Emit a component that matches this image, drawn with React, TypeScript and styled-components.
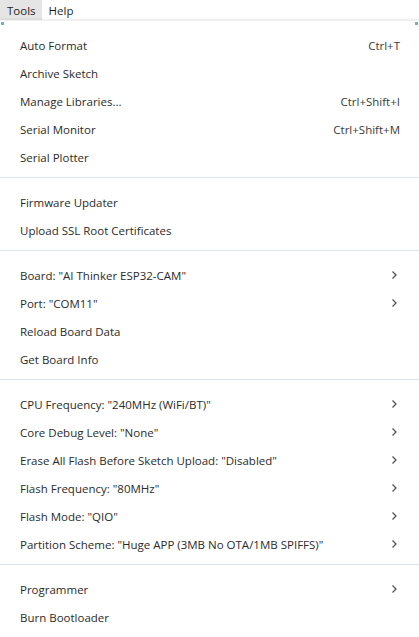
import React from "react";
import styled, { createGlobalStyle } from "styled-components";

const Global = createGlobalStyle`
  html, body { margin: 0; padding: 0; background: #ffffff; }
  body { font-family: "Segoe UI", "Open Sans", "Noto Sans", sans-serif; }
`;

const Page = styled.div`
  width: 419px;
  height: 637px;
  overflow: hidden;
  background: #ffffff;
  display: flex;
  flex-direction: column;
`;

const MenuBar = styled.div`
  display: flex;
  height: 22px;
  align-items: stretch;
  background: #ffffff;
`;

const MenuTitle = styled.div<{ $active?: boolean }>`
  display: flex;
  align-items: center;
  padding: 1px 6px 0 7px;
  font-size: 11.5px;
  color: #1f1f1f;
  background: ${(p) => (p.$active ? "#e5e5e5" : "transparent")};
`;

const Panel = styled.div`
  flex: 1;
  position: relative;
  background: #ffffff;
  box-shadow: 0 -1px 2px rgba(0, 0, 0, 0.08);
  border-top: 1px solid #f0f0f0;
  padding-top: 8px;
  display: flex;
  flex-direction: column;
`;

const Corner = styled.div<{ $side: "left" | "right" }>`
  position: absolute;
  top: 1px;
  ${(p) => (p.$side === "left" ? "left: 1px;" : "right: 1px;")}
  width: 3px;
  height: 3px;
  background: #3c8f8f;
  opacity: 0.7;
`;

const Section = styled.div`
  display: flex;
  flex-direction: column;
  padding: 0 0 8px;
`;

const Separator = styled.div`
  height: 1px;
  background: #dae3e8;
  margin-bottom: 8px;
`;

const Row = styled.div`
  box-sizing: border-box;
  height: 28px;
  display: flex;
  align-items: center;
  padding: 4px 19px 0 20px;
  font-size: 11.5px;
  color: #2b2b2b;
  white-space: nowrap;
`;

const Label = styled.span`
  flex: 1;
`;

const Shortcut = styled.span`
  color: #3a3a3a;
`;

const Chevron = styled.svg`
  width: 8px;
  height: 10px;
  margin-right: 2px;
`;

type Item = { label: string; shortcut?: string; sub?: boolean };

const sections: Item[][] = [
  [
    { label: "Auto Format", shortcut: "Ctrl+T" },
    { label: "Archive Sketch" },
    { label: "Manage Libraries...", shortcut: "Ctrl+Shift+I" },
    { label: "Serial Monitor", shortcut: "Ctrl+Shift+M" },
    { label: "Serial Plotter" },
  ],
  [{ label: "Firmware Updater" }, { label: "Upload SSL Root Certificates" }],
  [
    { label: 'Board: "AI Thinker ESP32-CAM"', sub: true },
    { label: 'Port: "COM11"', sub: true },
    { label: "Reload Board Data" },
    { label: "Get Board Info" },
  ],
  [
    { label: 'CPU Frequency: "240MHz (WiFi/BT)"', sub: true },
    { label: 'Core Debug Level: "None"', sub: true },
    { label: 'Erase All Flash Before Sketch Upload: "Disabled"', sub: true },
    { label: 'Flash Frequency: "80MHz"', sub: true },
    { label: 'Flash Mode: "QIO"', sub: true },
    { label: 'Partition Scheme: "Huge APP (3MB No OTA/1MB SPIFFS)"', sub: true },
  ],
  [{ label: "Programmer", sub: true }, { label: "Burn Bootloader" }],
];

const ChevronIcon = () => (
  <Chevron viewBox="0 0 8 10">
    <path d="M2.5 1.5 L6 5 L2.5 8.5" fill="none" stroke="#555" strokeWidth="1.3" />
  </Chevron>
);

export default function App() {
  return (
    <Page>
      <Global />
      <MenuBar>
        <MenuTitle $active>Tools</MenuTitle>
        <MenuTitle>Help</MenuTitle>
      </MenuBar>
      <Panel>
        <Corner $side="left" />
        <Corner $side="right" />
        {sections.map((sec, i) => (
          <React.Fragment key={i}>
            {i > 0 && <Separator />}
            <Section>
              {sec.map((it) => (
                <Row key={it.label}>
                  <Label>{it.label}</Label>
                  {it.shortcut && <Shortcut>{it.shortcut}</Shortcut>}
                  {it.sub && <ChevronIcon />}
                </Row>
              ))}
            </Section>
          </React.Fragment>
        ))}
      </Panel>
    </Page>
  );
}
